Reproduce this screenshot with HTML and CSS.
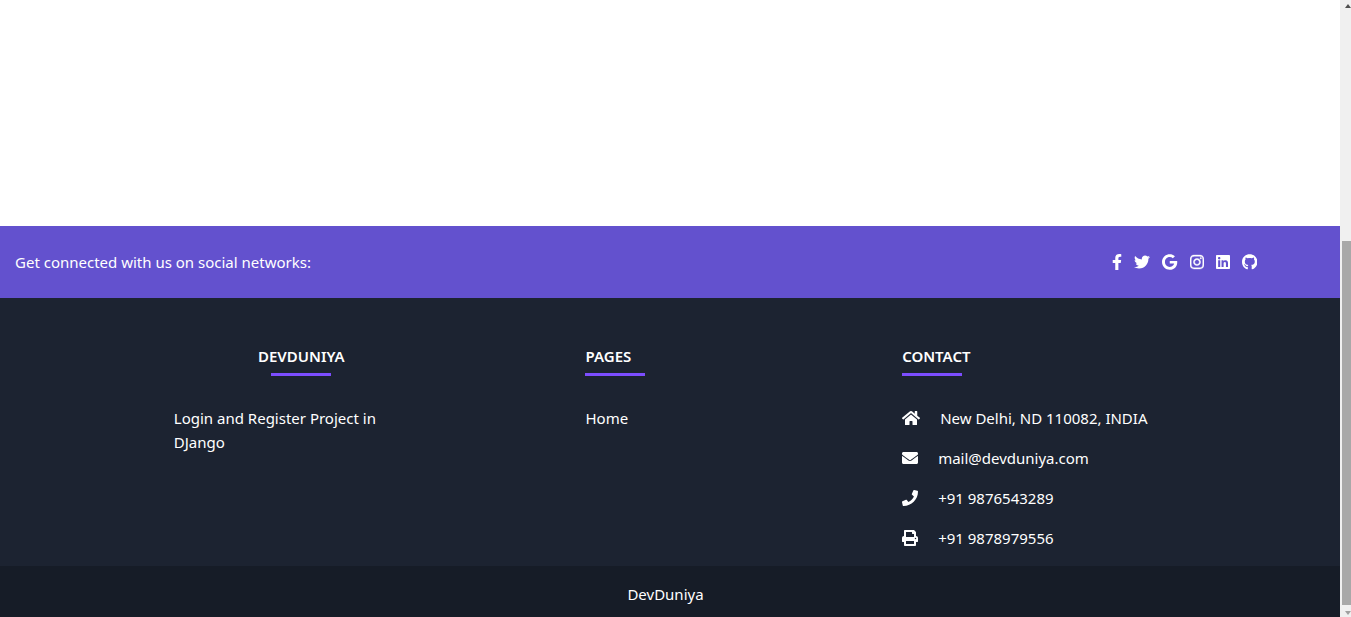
FILE: index.html
```html
<!DOCTYPE html>
<html lang="en">
<head>
<meta charset="utf-8">
<title>DevDuniya</title>
<link rel="stylesheet" href="styles.css">
</head>
<body>
<div class="page">
  <main class="content"></main>
  <footer class="footer">
    <section class="social">
      <span>Get connected with us on social networks:</span>
      <nav class="social-links" aria-label="Social networks">
        <a href="#" aria-label="Facebook"><svg class="icon" viewBox="0 0 320 512"><path d="M279.14 288l14.22-92.66h-88.91v-60.13c0-25.35 12.42-50.06 52.24-50.06h40.42V6.26S260.43 0 225.36 0c-73.22 0-121.08 44.38-121.08 124.72v70.62H22.89V288h81.39v224h100.17V288z"/></svg></a>
        <a href="#" aria-label="Twitter"><svg class="icon" viewBox="0 0 512 512"><path d="M459.37 151.716c.325 4.548.325 9.097.325 13.645 0 138.72-105.583 298.558-298.558 298.558-59.452 0-114.68-17.219-161.137-47.106 8.447.974 16.568 1.299 25.34 1.299 49.055 0 94.213-16.568 130.274-44.832-46.132-.975-84.792-31.188-98.112-72.772 6.498.974 12.995 1.624 19.818 1.624 9.421 0 18.843-1.3 27.614-3.573-48.081-9.747-84.143-51.98-84.143-102.985v-1.299c13.969 7.797 30.214 12.67 47.431 13.319-28.264-18.843-46.781-51.005-46.781-87.391 0-19.492 5.197-37.36 14.294-52.954 51.655 63.675 129.3 105.258 216.365 109.807-1.624-7.797-2.599-15.918-2.599-24.04 0-57.828 46.782-104.934 104.934-104.934 30.213 0 57.502 12.67 76.67 33.137 23.715-4.548 46.456-13.32 66.599-25.34-7.798 24.366-24.366 44.833-46.132 57.827 21.117-2.273 41.584-8.122 60.426-16.243-14.292 20.791-32.161 39.308-52.628 54.253z"/></svg></a>
        <a href="#" aria-label="Google"><svg class="icon" viewBox="0 0 488 512"><path d="M488 261.8C488 403.3 391.1 504 248 504 110.8 504 0 393.2 0 256S110.8 8 248 8c66.8 0 123 24.5 166.3 64.9l-67.5 64.9C258.5 52.6 94.3 116.6 94.3 256c0 86.5 69.1 156.6 153.7 156.6 98.2 0 135-70.4 140.8-106.9H248v-85.3h236.1c2.3 12.7 3.9 24.9 3.9 41.4z"/></svg></a>
        <a href="#" aria-label="Instagram"><svg class="icon icon-bold" viewBox="0 0 448 512"><path d="M224.1 141c-63.6 0-114.9 51.3-114.9 114.9s51.3 114.9 114.9 114.9S339 319.5 339 255.9 287.7 141 224.1 141zm0 189.6c-41.1 0-74.7-33.5-74.7-74.7s33.5-74.7 74.7-74.7 74.7 33.5 74.7 74.7-33.6 74.7-74.7 74.7zm146.4-194.3c0 14.9-12 26.8-26.8 26.8-14.9 0-26.8-12-26.8-26.8s12-26.8 26.8-26.8 26.8 12 26.8 26.8zm76.1 27.2c-1.7-35.9-9.9-67.7-36.2-93.9-26.2-26.2-58-34.4-93.9-36.2-37-2.1-147.9-2.1-184.9 0-35.8 1.7-67.6 9.9-93.9 36.1s-34.4 58-36.2 93.9c-2.1 37-2.1 147.9 0 184.9 1.7 35.9 9.9 67.7 36.2 93.9s58 34.4 93.9 36.2c37 2.1 147.9 2.1 184.9 0 35.9-1.7 67.7-9.9 93.9-36.2 26.2-26.2 34.4-58 36.2-93.9 2.1-37 2.1-147.8 0-184.8zM398.8 388c-7.8 19.6-22.9 34.7-42.6 42.6-29.5 11.7-99.5 9-132.1 9s-102.7 2.6-132.1-9c-19.6-7.8-34.7-22.9-42.6-42.6-11.7-29.5-9-99.5-9-132.1s-2.6-102.7 9-132.1c7.8-19.6 22.9-34.7 42.6-42.6 29.5-11.7 99.5-9 132.1-9s102.7-2.6 132.1 9c19.6 7.8 34.7 22.9 42.6 42.6 11.7 29.5 9 99.5 9 132.1s2.7 102.7-9 132.1z"/></svg></a>
        <a href="#" aria-label="LinkedIn"><svg class="icon" viewBox="0 0 448 512"><path d="M416 32H31.9C14.3 32 0 46.5 0 64.3v383.4C0 465.5 14.3 480 31.9 480H416c17.6 0 32-14.5 32-32.3V64.3c0-17.8-14.4-32.3-32-32.3zM135.4 416H69V202.2h66.5V416zm-33.2-243c-21.3 0-38.5-17.3-38.5-38.5S80.9 96 102.2 96c21.2 0 38.5 17.3 38.5 38.5 0 21.3-17.2 38.5-38.5 38.5zm282.1 243h-66.4V312c0-24.8-.5-56.7-34.5-56.7-34.6 0-39.9 27-39.9 54.9V416h-66.4V202.2h63.7v29.2h.9c8.9-16.8 30.6-34.5 62.9-34.5 67.2 0 79.7 44.3 79.7 101.9V416z"/></svg></a>
        <a href="#" aria-label="GitHub"><svg class="icon" viewBox="0 0 496 512"><path d="M244.8 8C106.1 8 0 113.3 0 252c0 110.9 69.8 205.8 169.5 239.2 12.8 2.3 17.3-5.6 17.3-12.1 0-6.2-.3-40.4-.3-61.4 0 0-70 15-84.7-29.8 0 0-11.4-29.1-27.8-36.6 0 0-22.9-15.7 1.6-15.4 0 0 24.9 2 38.6 25.8 21.9 38.6 58.6 27.5 72.9 20.9 2.3-16 8.8-27.1 16-33.7-55.9-6.2-112.3-14.3-112.3-110.5 0-27.5 7.6-41.3 23.6-58.9-2.6-6.5-11.1-33.3 2.6-67.9 20.9-6.5 69 27 69 27 20-5.6 41.5-8.5 62.8-8.5s42.8 2.9 62.8 8.5c0 0 48.1-33.6 69-27 13.7 34.7 5.2 61.4 2.6 67.9 16 17.7 25.8 31.5 25.8 58.9 0 96.5-58.9 104.2-114.8 110.5 9.2 7.9 17 22.9 17 46.4 0 33.7-.3 75.4-.3 83.6 0 6.5 4.6 14.4 17.3 12.1C428.2 457.8 496 362.9 496 252 496 113.3 383.5 8 244.8 8z"/></svg></a>
      </nav>
    </section>
    <section class="columns">
      <div class="column column-wide">
        <h6 class="title title-centered">DevDuniya</h6>
        <p class="line intro">Login and Register Project in DJango</p>
      </div>
      <div class="column column-narrow">
        <h6 class="title">Pages</h6>
        <p class="line"><a href="#">Home</a></p>
      </div>
      <div class="column column-wide">
        <h6 class="title">Contact</h6>
        <p class="line contact"><svg class="icon" viewBox="0 0 576 512"><path d="M280.37 148.26L96 300.11V464a16 16 0 0 0 16 16l112.06-.29a16 16 0 0 0 15.92-16V368a16 16 0 0 1 16-16h64a16 16 0 0 1 16 16v95.64a16 16 0 0 0 16 16.05L464 480a16 16 0 0 0 16-16V300L295.67 148.26a12.19 12.19 0 0 0-15.3 0zM571.6 251.47L488 182.56V44.05a12 12 0 0 0-12-12h-56a12 12 0 0 0-12 12v72.61L318.47 43a48 48 0 0 0-61 0L4.34 251.47a12 12 0 0 0-1.6 16.9l25.5 31A12 12 0 0 0 45.15 301l235.22-193.74a12.19 12.19 0 0 1 15.3 0L530.9 301a12 12 0 0 0 16.9-1.6l25.5-31a12 12 0 0 0-1.7-16.93z"/></svg>New Delhi, ND 110082, INDIA</p>
        <p class="line contact"><svg class="icon" viewBox="0 0 512 512"><path d="M502.3 190.8c3.9-3.1 9.7-.2 9.7 4.7V400c0 26.5-21.5 48-48 48H48c-26.5 0-48-21.5-48-48V195.6c0-5 5.7-7.8 9.7-4.7 22.4 17.4 52.1 39.5 154.1 113.6 21.1 15.4 56.7 47.8 92.2 47.6 35.7.3 72-32.8 92.3-47.6 102-74.1 131.6-96.3 154-113.7zM256 320c23.2.4 56.6-29.2 73.4-41.4 132.7-96.3 142.8-104.7 173.4-128.7 5.8-4.5 9.2-11.5 9.2-18.9v-19c0-26.5-21.5-48-48-48H48c-26.5 0-48 21.5-48 48v19c0 7.4 3.4 14.3 9.2 18.9 30.6 23.9 40.7 32.4 173.4 128.7 16.8 12.2 50.2 41.8 73.4 41.4z"/></svg>mail@devduniya.com</p>
        <p class="line contact"><svg class="icon" viewBox="0 0 512 512"><path d="M493.4 24.6l-104-24c-11.3-2.6-22.9 3.3-27.5 13.9l-48 112c-4.2 9.8-1.4 21.3 6.9 28l60.6 49.6c-36 76.7-98.9 140.5-177.2 177.2l-49.6-60.6c-6.8-8.3-18.2-11.1-28-6.9l-112 48C3.9 366.5-2 378.1.6 389.4l24 104C27.1 504.2 36.7 512 48 512c256.1 0 464-207.5 464-464 0-11.2-7.7-20.9-18.6-23.4z"/></svg>+91 9876543289</p>
        <p class="line contact"><svg class="icon" viewBox="0 0 512 512"><path d="M448 192V77.25c0-8.49-3.37-16.62-9.37-22.63L393.37 9.37c-6-6-14.14-9.37-22.63-9.37H96C78.33 0 64 14.33 64 32v160c-35.35 0-64 28.65-64 64v112c0 8.84 7.16 16 16 16h48v96c0 17.67 14.33 32 32 32h320c17.67 0 32-14.33 32-32v-96h48c8.84 0 16-7.16 16-16V256c0-35.35-28.65-64-64-64zm-64 256H128v-96h256v96zm0-224H128V64h192v48c0 8.84 7.16 16 16 16h48v96zm48 72c-13.25 0-24-10.75-24-24 0-13.26 10.75-24 24-24s24 10.74 24 24c0 13.25-10.75 24-24 24z"/></svg>+91 9878979556</p>
      </div>
    </section>
    <div class="copyright"><a href="#">DevDuniya</a></div>
  </footer>
</div>
<div class="scrollbar" aria-hidden="true">
  <span class="arrow arrow-up"></span>
  <span class="thumb"></span>
  <span class="arrow arrow-down"></span>
</div>
</body>
</html>
```
FILE: styles.css
```css
* {
  box-sizing: border-box;
}

body {
  display: flex;
  min-height: 100vh;
  margin: 0;
  background: #fff;
  color: #fff;
  font: 15px/24px "Segoe UI", "Noto Sans", "Open Sans", sans-serif;
}

a {
  color: inherit;
  text-decoration: none;
}

.page {
  display: flex;
  flex: 1;
  flex-direction: column;
}

.content {
  flex: 1;
}

.footer {
  background: #1c2331;
}

.social {
  display: flex;
  justify-content: space-between;
  padding: 24px 83px 24px 15px;
  background: #6351ce;
}

.social-links {
  display: flex;
  gap: 12px;
}

.social-links a {
  display: flex;
  align-items: center;
}

.icon {
  flex: none;
  height: 16px;
  fill: currentColor;
}

.icon-bold {
  stroke: currentColor;
  stroke-width: 12;
}

.columns {
  display: flex;
  justify-content: space-around;
  max-width: 1149px;
  margin: 0 auto;
  padding: 46px 9px 0 0;
}

.column {
  padding: 0 15px;
}

.column-wide {
  width: 25%;
}

.column-narrow {
  width: calc(100% / 6);
}

.title {
  margin: 0 0 30px;
  font-size: 15px;
  font-weight: 600;
  line-height: 24px;
  text-transform: uppercase;
}

.title::after {
  display: block;
  width: 60px;
  height: 3px;
  margin-top: 5px;
  background: #7c4dff;
  content: "";
}

.title-centered {
  text-align: center;
}

.title-centered::after {
  margin-right: auto;
  margin-left: auto;
}

.line {
  margin: 0 0 16px;
}

.intro {
  max-width: 240px;
}

.contact {
  display: flex;
  align-items: center;
  gap: 20px;
}

.copyright {
  padding: 16px 9px 11px 0;
  background: #161c27;
  text-align: center;
}

.scrollbar {
  display: flex;
  flex-direction: column;
  align-items: flex-end;
  width: 11px;
  padding: 4px 0 2px;
  background: #f0f0f0;
}

.thumb {
  width: 9px;
  height: 59vh;
  margin: auto 0 6px;
  background: #a8a8a8;
}

.arrow {
  border: 3px solid transparent;
}

.arrow-up {
  border-top: 0;
  border-bottom: 4px solid #505050;
}

.arrow-down {
  border-top: 4px solid #a0a0a0;
  border-bottom: 0;
}
```
